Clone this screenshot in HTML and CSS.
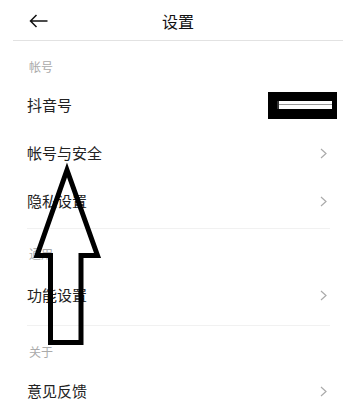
FILE: index.html
```html
<!DOCTYPE html>
<html lang="zh">
<head>
<meta charset="utf-8">
<title>设置</title>
<link rel="stylesheet" href="styles.css">
</head>
<body>
<div class="page">
  <header class="topbar">
    <span class="back">
      <svg width="19" height="14" viewBox="0 0 19 14"><path d="M18.5 7H1.5M7.5 1L1.5 7L7.5 13" fill="none" stroke="#111" stroke-width="1.5"/></svg>
    </span>
    <span class="title">设置</span>
    <span></span>
  </header>

  <section class="group">
    <div class="label">帐号</div>
    <div class="row">
      <span class="text">抖音号</span>
      <span class="redact"><span class="bar"></span></span>
    </div>
    <div class="row">
      <span class="text">帐号与安全</span>
      <svg class="chev" width="7" height="11" viewBox="0 0 7 11"><path d="M1 1L6 5.5L1 10" fill="none" stroke="#aaa" stroke-width="1.2"/></svg>
    </div>
    <div class="row">
      <span class="text">隐私设置</span>
      <svg class="chev" width="7" height="11" viewBox="0 0 7 11"><path d="M1 1L6 5.5L1 10" fill="none" stroke="#aaa" stroke-width="1.2"/></svg>
    </div>
  </section>
  <div class="sep sep-first"></div>

  <section class="group">
    <div class="label label-general">通用</div>
    <div class="row">
      <span class="text">功能设置</span>
      <svg class="chev" width="7" height="11" viewBox="0 0 7 11"><path d="M1 1L6 5.5L1 10" fill="none" stroke="#aaa" stroke-width="1.2"/></svg>
    </div>
  </section>
  <div class="sep"></div>

  <section class="group">
    <div class="label label-about">关于</div>
    <div class="row">
      <span class="text">意见反馈</span>
      <svg class="chev" width="7" height="11" viewBox="0 0 7 11"><path d="M1 1L6 5.5L1 10" fill="none" stroke="#aaa" stroke-width="1.2"/></svg>
    </div>
  </section>

  <svg class="arrow" width="349" height="408" viewBox="0 0 349 408">
    <path d="M67 170L97.5 255.5H81V342.5H50.5V255.5H37Z" fill="none" stroke="#000" stroke-width="5" stroke-linejoin="miter"/>
  </svg>
</div>
</body>
</html>
```

FILE: styles.css
```css
html, body {
  margin: 0;
  padding: 0;
  background: #fff;
}
body {
  font-family: "Noto Sans CJK SC", "Noto Sans", sans-serif;
  color: #222;
}
.page {
  position: relative;
  width: 349px;
  height: 408px;
  overflow: hidden;
}
.topbar {
  display: grid;
  grid-template-columns: 1fr auto 1fr;
  align-items: center;
  height: 40px;
  margin: 0 6px 0 13px;
  border-bottom: 1px solid #e2e2e2;
}
.back {
  display: flex;
  align-items: center;
  padding-left: 16px;
  padding-top: 2px;
}
.title {
  font-size: 16px;
  line-height: 20px;
  color: #111;
  padding-top: 1px;
}
.group {
  display: flex;
  flex-direction: column;
}
.label {
  font-size: 12px;
  line-height: 16px;
  color: #aaa;
  padding: 18px 0 6px 29px;
}
.label-general {
  padding-top: 17px;
  padding-bottom: 9px;
}
.label-about {
  padding-top: 18px;
  padding-bottom: 7px;
}
.row {
  display: flex;
  align-items: center;
  justify-content: space-between;
  height: 48px;
  padding: 0 22px 0 27px;
}
.text {
  font-size: 15px;
  line-height: 20px;
  color: #222;
}
.chev {
  display: block;
}
.redact {
  display: flex;
  align-items: center;
  justify-content: flex-end;
  width: 69px;
  height: 27px;
  margin-right: -10px;
  background: #000;
  padding-right: 5px;
  box-sizing: border-box;
}
.bar {
  display: block;
  width: 55px;
  height: 8px;
  background: #fff;
  border-left: 2px solid #333;
  box-sizing: border-box;
  background-image: linear-gradient(#fff 0, #fff 3px, #9a9a9a 3px, #9a9a9a 4px, #fff 4px);
}
.sep {
  height: 1px;
  background: #f1f1f1;
  margin: 6px 19px 0 27px;
}
.sep-first {
  margin-top: 3px;
}
.arrow {
  position: absolute;
  top: 0;
  left: 0;
  pointer-events: none;
}
```
